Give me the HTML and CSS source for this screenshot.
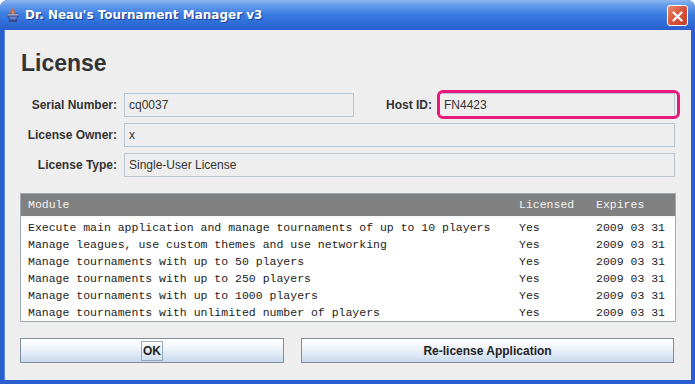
FILE: index.html
```html
<!DOCTYPE html>
<html lang="en">
<head>
    <meta charset="UTF-8">
    <title>Dr. Neau's Tournament Manager v3</title>
    <link rel="stylesheet" href="styles.css">
</head>
<body>
    <div class="window">
        <div class="titlebar">
            <svg class="app-icon" width="16" height="16" viewBox="0 0 16 16">
                <path d="M7 1 C5 3 6 5 5 7 L10 7 C10 5 9 3 7 1 Z" fill="#e0603a"/>
                <path d="M8 3 C8 5 9 6 9 7 L7 7 C7 6 8 5 8 3 Z" fill="#f6c34a"/>
                <rect x="2" y="7" width="12" height="2" rx="1" fill="#d8e4f8" stroke="#3a4a8a" stroke-width="0.8"/>
                <path d="M3 9 L13 9 L11 13 L5 13 Z" fill="#6a7fc8" stroke="#2a3a7a" stroke-width="0.8"/>
                <rect x="4" y="13" width="8" height="2" fill="#3a4a8a"/>
            </svg>
            <span class="title">Dr. Neau's Tournament Manager v3</span>
            <button class="close" type="button">
                <svg width="21" height="21" viewBox="0 0 21 21">
                    <path d="M6 6 L15 15 M15 6 L6 15" stroke="#fff" stroke-width="2.4" stroke-linecap="round"/>
                </svg>
            </button>
        </div>

        <div class="content">
            <h1>License</h1>

            <div class="fields">
                <label class="lbl">Serial Number:</label>
                <div class="field">cq0037</div>
                <label class="lbl">Host ID:</label>
                <div class="field host">FN4423<span class="highlight"></span></div>

                <label class="lbl">License Owner:</label>
                <div class="field wide">x</div>

                <label class="lbl">License Type:</label>
                <div class="field wide">Single-User License</div>
            </div>

            <div class="table">
                <div class="row head">
                    <span class="c-mod">Module</span>
                    <span class="c-lic">Licensed</span>
                    <span class="c-exp">Expires</span>
                </div>
                <div class="body">
                    <div class="row">
                        <span class="c-mod">Execute main application and manage tournaments of up to 10 players</span>
                        <span class="c-lic">Yes</span>
                        <span class="c-exp">2009 03 31</span>
                    </div>
                    <div class="row">
                        <span class="c-mod">Manage leagues, use custom themes and use networking</span>
                        <span class="c-lic">Yes</span>
                        <span class="c-exp">2009 03 31</span>
                    </div>
                    <div class="row">
                        <span class="c-mod">Manage tournaments with up to 50 players</span>
                        <span class="c-lic">Yes</span>
                        <span class="c-exp">2009 03 31</span>
                    </div>
                    <div class="row">
                        <span class="c-mod">Manage tournaments with up to 250 players</span>
                        <span class="c-lic">Yes</span>
                        <span class="c-exp">2009 03 31</span>
                    </div>
                    <div class="row">
                        <span class="c-mod">Manage tournaments with up to 1000 players</span>
                        <span class="c-lic">Yes</span>
                        <span class="c-exp">2009 03 31</span>
                    </div>
                    <div class="row">
                        <span class="c-mod">Manage tournaments with unlimited number of players</span>
                        <span class="c-lic">Yes</span>
                        <span class="c-exp">2009 03 31</span>
                    </div>
                </div>
            </div>

            <div class="buttons">
                <button class="btn ok" type="button"><span class="focus">OK</span></button>
                <button class="btn relicense" type="button">Re-license Application</button>
            </div>
        </div>
    </div>
</body>
</html>
```

FILE: styles.css
```css
body {
    margin: 0;
    background: #ffffff;
    font-family: 'Liberation Sans', Arial, sans-serif;
}

.window {
    width: 695px;
    height: 384px;
    box-sizing: border-box;
    display: flex;
    flex-direction: column;
    background: #2b5fd0;
    border-radius: 8px 8px 0 0;
    overflow: hidden;
}

.titlebar {
    height: 30px;
    flex: none;
    display: flex;
    align-items: center;
    padding: 0 6px 0 5px;
    background: linear-gradient(to bottom, #8fb8f2 0%, #6a9fec 15%, #3f80e2 45%, #3070da 70%, #2a5fcc 100%);
    color: #fff;
}

.app-icon {
    flex: none;
    margin-right: 4px;
}

.title {
    font-family: 'DejaVu Sans', Verdana, sans-serif;
    font-weight: bold;
    font-size: 12px;
    text-shadow: 1px 1px 0 #1a3d8f;
    flex: 1;
}

.close {
    width: 21px;
    height: 21px;
    padding: 0;
    border: 1px solid #fff;
    border-radius: 3px;
    background: linear-gradient(135deg, #e88a6c 0%, #d7553a 50%, #c0402a 100%);
    display: flex;
    margin-right: 1px;
}

.content {
    flex: 1;
    margin: 0 4px 4px 4px;
    background: #eeeeee;
    padding: 0 13px 0 15px;
    border-left: 1px solid #5a86e0;
}

h1 {
    margin: 20px 0 17px 1px;
    font-size: 23px;
    font-weight: bold;
    color: #333;
    line-height: 26px;
}

.fields {
    display: grid;
    grid-template-columns: 97px 230px 1fr 239px;
    column-gap: 7px;
    row-gap: 6px;
    align-items: center;
}

.lbl {
    text-align: right;
    font-size: 12px;
    font-weight: bold;
    color: #333;
}

.field {
    height: 24px;
    box-sizing: border-box;
    border: 1px solid #b8c6d4;
    padding: 0 4px;
    font-size: 12px;
    line-height: 22px;
    color: #333;
}

.field.wide {
    grid-column: 2 / 5;
    margin-right: 3px;
}

.host {
    position: relative;
    margin-right: 3px;
}

.highlight {
    position: absolute;
    left: -3px;
    top: -4px;
    right: -6px;
    bottom: -3px;
    border: 3px solid #e8187c;
    border-radius: 6px;
}

.table {
    margin: 16px 0 0 0;
    width: 654px;
    border: 1px solid #a0aab4;
    background: #fff;
    font-family: 'Liberation Mono', 'Courier New', monospace;
    font-size: 11.5px;
    color: #222;
}

.row {
    display: flex;
    height: 17px;
    line-height: 17px;
    padding-left: 7px;
    white-space: nowrap;
}

.row.head {
    height: 22px;
    line-height: 22px;
    background: #808080;
    color: #f2f2f2;
    border-bottom: 2px solid #f8f8f8;
}

.body {
    padding-top: 1px;
    height: 102px;
}

.c-mod {
    width: 491px;
}

.c-lic {
    width: 77px;
}

.buttons {
    display: grid;
    grid-template-columns: 264px 373px;
    column-gap: 17px;
    margin-top: 16px;
}

.btn {
    height: 25px;
    border: 1px solid #7f8fa0;
    background: linear-gradient(to bottom, #ffffff 0%, #f4f8fc 30%, #dce8f4 70%, #c8d8ea 100%);
    font-family: 'Liberation Sans Narrow', 'Liberation Sans', Arial, sans-serif;
    font-size: 12px;
    font-weight: bold;
    color: #222;
    padding: 0;
}

.focus {
    border: 1px solid #9aa8bc;
    padding: 2px 1px;
}
```
